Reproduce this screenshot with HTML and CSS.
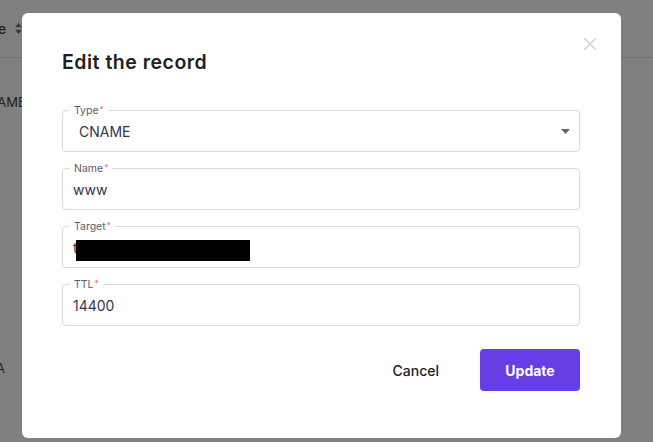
FILE: index.html
```html
<!DOCTYPE html>
<html lang="en">
<head>
<meta charset="utf-8">
<title>Edit the record</title>
<link rel="stylesheet" href="styles.css">
</head>
<body>
<div class="page">
  <div class="table">
    <div class="thead">
      <span class="th">Type</span>
      <svg class="sort" width="7" height="11" viewBox="0 0 7 11"><path d="M3.5 0 L7 4.2 L0 4.2 Z M3.5 11 L7 6.8 L0 6.8 Z" fill="#3a3a3a"/></svg>
    </div>
    <div class="row row-first">CNAME</div>
    <div class="row row-second">A</div>
  </div>
</div>

<div class="modal">
  <button class="close" aria-label="Close">
    <svg width="14" height="14" viewBox="0 0 14 14"><path d="M1 1 L13 13 M13 1 L1 13" stroke="#d2d2d6" stroke-width="1.6" fill="none"/></svg>
  </button>
  <h2 class="title">Edit the record</h2>
  <form class="form">
    <div class="field field-select">
      <span class="label">Type<span class="req">*</span></span>
      <span class="value">CNAME</span>
      <svg class="caret" width="9" height="5" viewBox="0 0 9 5"><path d="M0 0 H9 L4.5 5 Z" fill="#66647a"/></svg>
    </div>
    <div class="field">
      <span class="label">Name<span class="req">*</span></span>
      <span class="value">www</span>
    </div>
    <div class="field">
      <span class="label">Target<span class="req">*</span></span>
      <span class="value">t</span><span class="redact"></span>
    </div>
    <div class="field">
      <span class="label">TTL<span class="req">*</span></span>
      <span class="value">14400</span>
    </div>
    <div class="actions">
      <button type="button" class="btn btn-cancel">Cancel</button>
      <button type="button" class="btn btn-update">Update</button>
    </div>
  </form>
</div>
</body>
</html>
```

FILE: styles.css
```css
html, body {
  margin: 0;
  padding: 0;
}
body {
  background: #808080;
  font-family: Inter, "Noto Sans", sans-serif;
  width: 653px;
  height: 442px;
  overflow: hidden;
}
.page {
  margin-left: -28px;
}
.thead {
  height: 58px;
  border-bottom: 1px solid #727272;
  display: flex;
  align-items: center;
  gap: 9px;
  padding-left: 1px;
  font-size: 14px;
  color: #1e1e1e;
  box-sizing: border-box;
}
.thead .th {
  font-weight: 500;
}
.row {
  font-size: 13px;
  color: #1e1e1e;
}
.row-first {
  padding-top: 36px;
  padding-left: 6px;
}
.row-second {
  padding-top: 250px;
  padding-left: 24px;
}

.modal {
  position: fixed;
  left: 22px;
  top: 13px;
  width: 599px;
  height: 425px;
  box-sizing: border-box;
  background: #fff;
  border-radius: 6px;
  padding: 37px 41px 0 40px;
}
.close {
  position: absolute;
  top: 24px;
  right: 24px;
  width: 14px;
  height: 14px;
  padding: 0;
  border: 0;
  background: none;
  display: flex;
}
.title {
  margin: 0;
  font-size: 19.5px;
  line-height: 24px;
  font-weight: 600;
  color: #1d1e20;
  letter-spacing: 0.5px;
}
.form {
  margin-top: 36px;
  display: flex;
  flex-direction: column;
  gap: 16px;
}
.field {
  position: relative;
  height: 42px;
  box-sizing: border-box;
  border: 1px solid #d9d9de;
  border-radius: 4px;
  display: flex;
  align-items: center;
  padding: 0 9px 0 10px;
}
.field-select {
  padding-left: 16px;
}
.label {
  position: absolute;
  top: -7px;
  left: 6px;
  padding: 0 4px 0 5px;
  background: #fff;
  font-size: 10.5px;
  line-height: 14px;
  color: #5c5b66;
}
.req {
  color: #fc5185;
  font-size: 8px;
  vertical-align: top;
  line-height: 10px;
  margin-left: 1px;
}
.value {
  font-size: 14px;
  color: #36344d;
}
.caret {
  margin-left: auto;
}
.redact {
  display: inline-block;
  width: 174px;
  height: 21px;
  background: #000;
  margin-left: -2px;
  margin-top: 7px;
}
.actions {
  margin-top: 7px;
  display: flex;
  justify-content: flex-end;
  gap: 21px;
}
.btn {
  height: 42px;
  border: 0;
  border-radius: 4px;
  font-family: Inter, "Noto Sans", sans-serif;
  font-size: 14px;
  cursor: pointer;
}
.btn-cancel {
  background: none;
  padding: 0 20px;
  color: #1d1e20;
  font-weight: 500;
}
.btn-update {
  width: 100px;
  background: #673de6;
  color: #fff;
  font-weight: 700;
}
```
